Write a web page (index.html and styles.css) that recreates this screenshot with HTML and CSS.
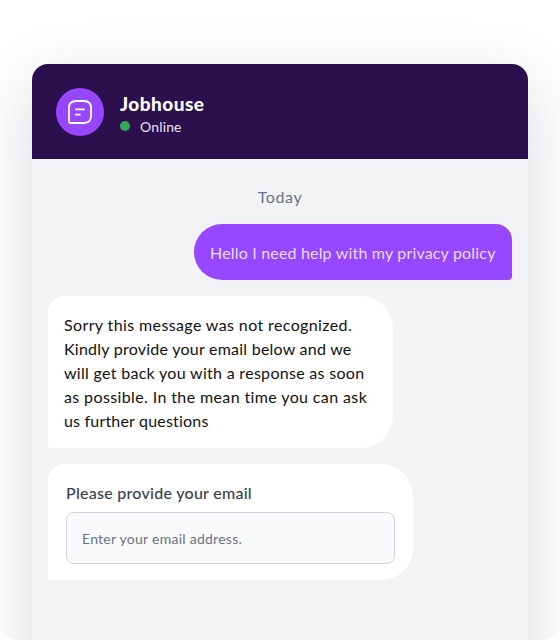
FILE: index.html
```html
<!DOCTYPE html>
<html lang="en">
<head>
<meta charset="utf-8">
<title>Jobhouse chat</title>
<link rel="stylesheet" href="styles.css">
</head>
<body>
<div class="stage">
  <section class="chat">
    <header class="chat-header">
      <div class="avatar">
        <svg width="24" height="24" viewBox="0 0 24 24" fill="none" stroke="#fff" stroke-width="1.8" stroke-linecap="round" stroke-linejoin="round">
          <path d="M1 8.200C1 3.500 3.500 1 8.200 1h7.600C20.500 1 23 3.500 23 8.200v7.600c0 4.700-2.500 7.200-7.200 7.200H2.200C1.400 23 1 22.600 1 21.800z"/>
          <path d="M7.800 9.300h8.400M7.800 14.700h4"/>
        </svg>
      </div>
      <div class="identity">
        <h1 class="name">Jobhouse</h1>
        <div class="status"><span class="dot"></span><span class="online">Online</span></div>
      </div>
    </header>
    <main class="messages">
      <div class="day">Today</div>
      <div class="bubble sent">Hello I need help with my privacy policy</div>
      <div class="bubble received">
        <span class="line l1">Sorry this message was not recognized.</span>
        <span class="line l2">Kindly provide your email below and we</span>
        <span class="line l3">will get back you with a response as soon</span>
        <span class="line l4">as possible. In the mean time you can ask</span>
        <span class="line l5">us further questions</span>
      </div>
      <form class="bubble email-form">
        <label class="label" for="email">Please provide your email</label>
        <input class="field" id="email" type="email" placeholder="Enter your email address.">
      </form>
    </main>
  </section>
</div>
</body>
</html>
```
FILE: styles.css
```css
* { box-sizing: border-box; }
body { margin: 0; background: #fff; font-family: Lato, "Liberation Sans", sans-serif; font-variant-ligatures: none; }
.stage { height: 640px; padding: 64px 32px 0; overflow: hidden; border-radius: 0 0 16px 16px; }
.chat { height: 660px; border-radius: 16px 16px 0 0; background: #f2f3f5; box-shadow: 0 20px 64px rgba(33, 42, 54, .18); }
.chat-header { display: flex; align-items: center; gap: 16px; height: 95px; padding: 0 24px; border-radius: 16px 16px 0 0; background: #2c0f4d; color: #fff; }
.avatar { display: flex; align-items: center; justify-content: center; width: 48px; height: 48px; border-radius: 50%; background: #9747ff; }
.identity { padding-top: 5px; }
.name { margin: 0; font-size: 19px; line-height: 24px; font-weight: 900; letter-spacing: .45px; }
.status { display: flex; align-items: center; gap: 10px; height: 20px; }
.dot { width: 10px; height: 10px; margin-top: -1px; border-radius: 50%; background: #34a853; }
.online { font-size: 14px; letter-spacing: .15px; color: #e9e2f2; }
.messages { display: flex; flex-direction: column; align-items: flex-start; gap: 16px; padding: 25px 16px; }
.day { align-self: center; height: 24px; font-size: 16px; line-height: 26px; letter-spacing: .6px; color: #64748b; }
.bubble { background: #fff; font-size: 16px; line-height: 24px; }
.sent { align-self: flex-end; width: 318px; height: 56px; padding: 17px 16px; border-radius: 28px 16px 4px 28px; background: #9747ff; color: #eadcff; letter-spacing: .18px; white-space: nowrap; }
.received { width: 345px; height: 152px; padding: 17px 16px; border-radius: 16px 32px 32px 4px; color: #111; }
.line { display: block; white-space: nowrap; }
.l1 { letter-spacing: .38px; }
.l2 { letter-spacing: .24px; }
.l3 { letter-spacing: .3px; }
.l4 { letter-spacing: .38px; }
.l5 { letter-spacing: .19px; }
.email-form { width: 365px; height: 116px; padding: 17px 18px 18px; border-radius: 16px 32px 32px 4px; }
.label { display: block; height: 31px; font-weight: 500; letter-spacing: .27px; color: #374151; }
.field { display: block; width: 329px; height: 52px; padding: 1px 15px 0; border: 1px solid #d1d5db; border-radius: 8px; background: #f9fafb; font: 14px Lato, "Liberation Sans", sans-serif; letter-spacing: .26px; color: #6b7280; outline: none; }
.field::placeholder { color: #6b7280; opacity: 1; }
```
